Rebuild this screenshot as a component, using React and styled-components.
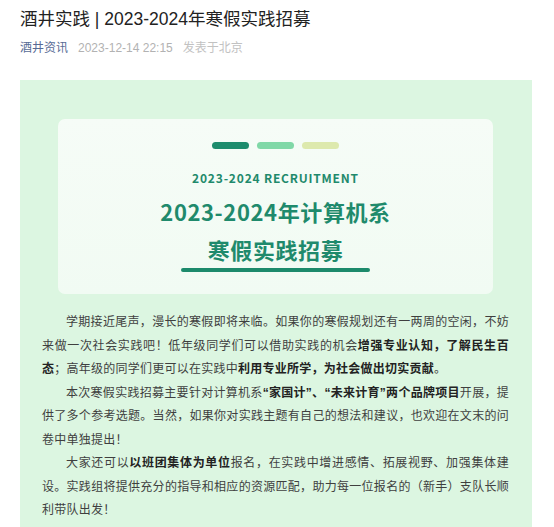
import React from "react";
import styled, { createGlobalStyle } from "styled-components";

const GlobalStyle = createGlobalStyle`
  html, body {
    margin: 0;
    padding: 0;
    background: #ffffff;
  }
  body {
    font-family: "Liberation Sans", "Noto Sans CJK SC", sans-serif;
  }
`;

const Page = styled.div`
  width: 554px;
  padding: 0 22px 0 20px;
  box-sizing: border-box;
`;

const Title = styled.h1`
  margin: 7px 0 0;
  font-size: 17.5px;
  line-height: 24px;
  font-weight: 400;
  color: #222222;
`;

const Meta = styled.div`
  display: flex;
  align-items: center;
  gap: 10px;
  margin-top: 8px;
  font-size: 12px;
  line-height: 18px;
`;

const MetaItem = styled.span`
  color: ${(p) => p.$color || "#b2b2b2"};
`;

const Panel = styled.section`
  margin-top: 23px;
  background: #dcf6e1;
  padding: 39px 23px 24px 22px;
`;

const Card = styled.div`
  display: flex;
  flex-direction: column;
  align-items: center;
  margin: 0 16px 0 16px;
  padding: 23px 0 22px;
  border-radius: 7px;
  background: linear-gradient(180deg, #f6fcf7 0%, #f1fbf3 100%);
  font-family: "Noto Sans CJK SC", sans-serif;
`;

const Pills = styled.div`
  display: flex;
  gap: 8px;
`;

const Pill = styled.span`
  width: 37px;
  height: 7px;
  border-radius: 4px;
  background: ${(p) => p.$color};
`;

const Recruit = styled.div`
  margin-top: 21px;
  font-size: 12px;
  line-height: 16px;
  font-weight: 700;
  letter-spacing: 0.8px;
  color: #1f8a6c;
`;

const BigTitle = styled.div`
  margin-top: 6px;
  font-size: 22px;
  line-height: 38px;
  font-weight: 700;
  letter-spacing: 0.6px;
  text-align: center;
  color: #1f8a6c;
`;

const Underline = styled.div`
  width: 189px;
  height: 4px;
  border-radius: 2px;
  background: #1c8a6b;
`;

const Body = styled.div`
  margin-top: 17px;
  font-size: 12px;
  line-height: 23.5px;
  letter-spacing: 0.25px;
  color: #3f3f3f;
  text-align: justify;
`;

const Para = styled.p`
  margin: 0;
  text-indent: 2em;
`;

const Strong = styled.strong`
  font-weight: 700;
  color: #222222;
`;

export default function App() {
  return (
    <Page>
      <GlobalStyle />
      <Title>酒井实践 | 2023-2024年寒假实践招募</Title>
      <Meta>
        <MetaItem $color="#576b95">酒井资讯</MetaItem>
        <MetaItem>2023-12-14 22:15</MetaItem>
        <MetaItem $color="#c2c2c2">发表于北京</MetaItem>
      </Meta>
      <Panel>
        <Card>
          <Pills>
            <Pill $color="#1d8c6d" />
            <Pill $color="#80d8a7" />
            <Pill $color="#dde9ad" />
          </Pills>
          <Recruit>2023-2024 RECRUITMENT</Recruit>
          <BigTitle>
            2023-2024年计算机系
            <br />
            寒假实践招募
          </BigTitle>
          <Underline />
        </Card>
        <Body>
          <Para>
            学期接近尾声，漫长的寒假即将来临。如果你的寒假规划还有一两周的空闲，不妨来做一次社会实践吧！低年级同学们可以借助实践的机会
            <Strong>增强专业认知，了解民生百态</Strong>；高年级的同学们更可以在实践中
            <Strong>利用专业所学，为社会做出切实贡献</Strong>。
          </Para>
          <Para>
            本次寒假实践招募主要针对计算机系
            <Strong>“家国计”、“未来计育”两个品牌项目</Strong>
            开展，提供了多个参考选题。当然，如果你对实践主题有自己的想法和建议，也欢迎在文末的问卷中单独提出！
          </Para>
          <Para>
            大家还可以<Strong>以班团集体为单位</Strong>
            报名，在实践中增进感情、拓展视野、加强集体建设。实践组将提供充分的指导和相应的资源匹配，助力每一位报名的（新手）支队长顺利带队出发！
          </Para>
        </Body>
      </Panel>
    </Page>
  );
}
